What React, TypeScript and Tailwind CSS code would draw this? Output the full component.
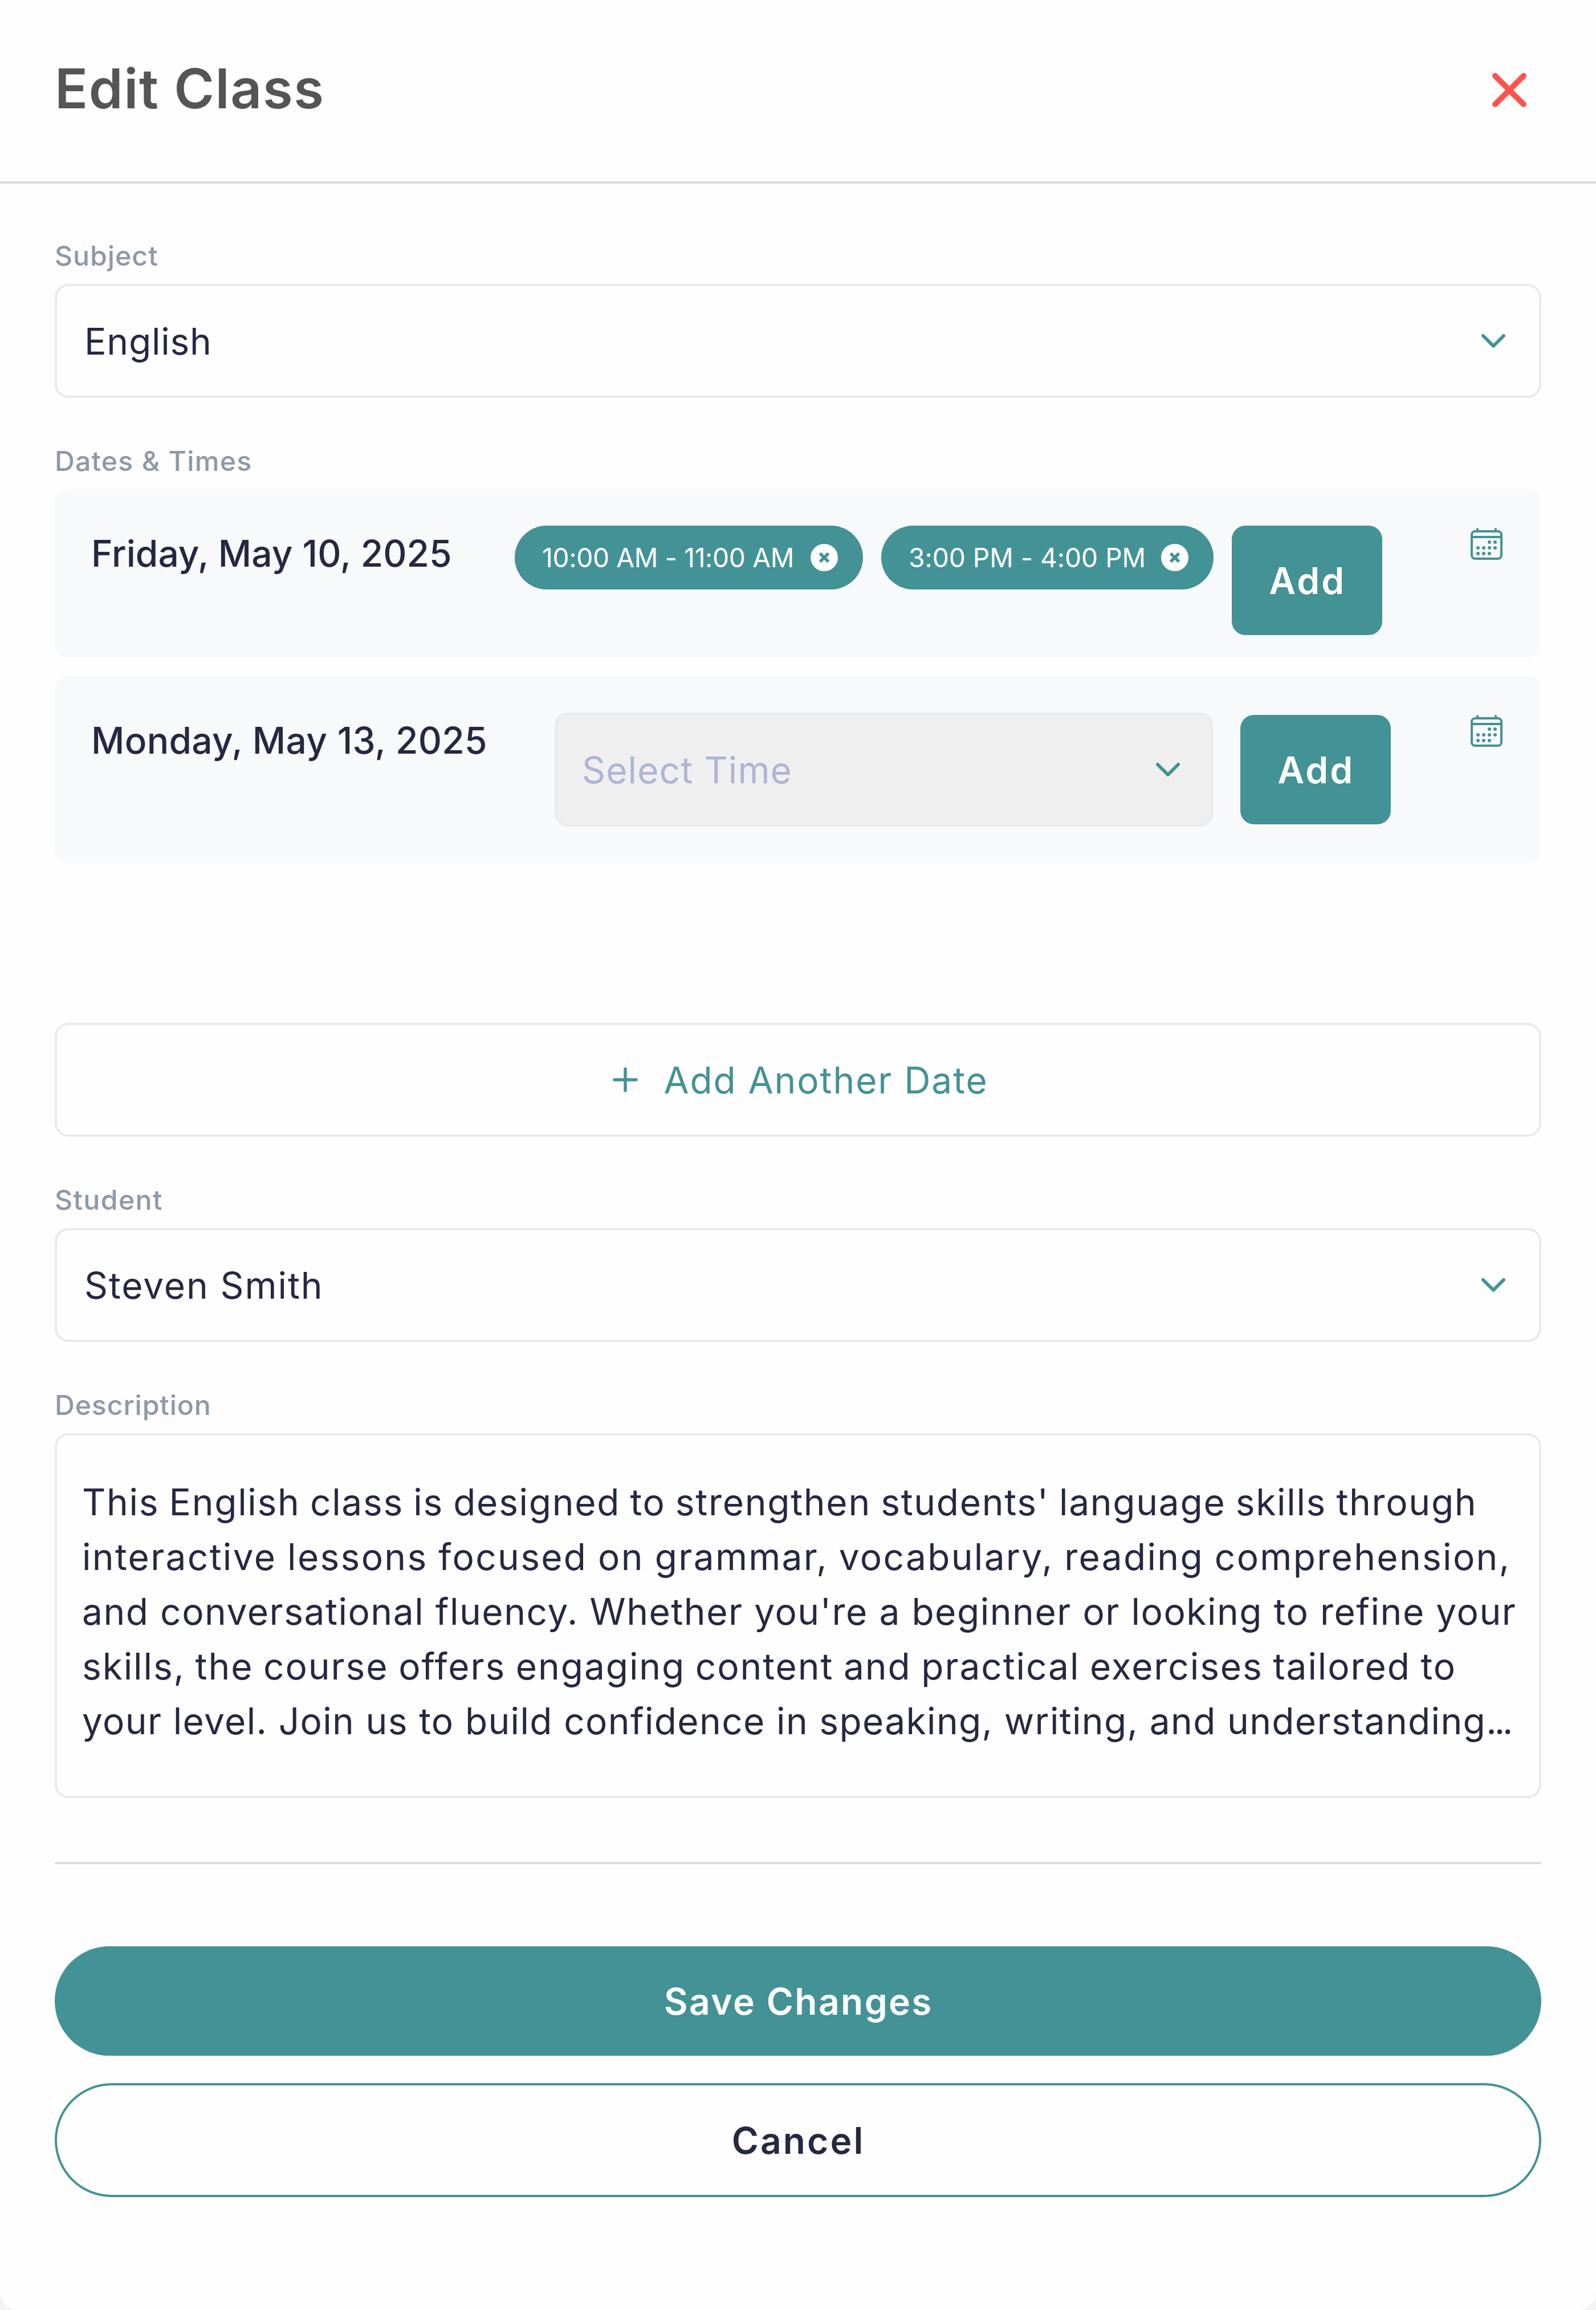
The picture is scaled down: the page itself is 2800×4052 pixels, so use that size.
import type { ReactNode } from "react";

function Chevron() {
  return (
    <svg className="size-12 shrink-0" viewBox="0 0 48 48" fill="none" stroke="#439295" strokeWidth="6" strokeLinecap="round" strokeLinejoin="round">
      <path d="M6 15 24 33 42 15" />
    </svg>
  );
}

function CalendarIcon() {
  const dots = [
    [37, 29], [47, 29],
    [17, 39], [27, 39], [37, 39], [47, 39],
    [17, 49], [27, 49], [37, 49],
  ];
  return (
    <svg className="size-16 shrink-0" viewBox="0 0 64 64" fill="none" stroke="#439295" strokeWidth="4">
      <rect x="6" y="10" width="52" height="48" rx="6" />
      <path d="M6 20H58" />
      <path d="M16 6V10M48 6V10" strokeLinecap="round" />
      {dots.map(([x, y]) => (
        <circle key={`${x}-${y}`} cx={x} cy={y} r="3" fill="#439295" stroke="none" />
      ))}
    </svg>
  );
}

function Label({ children, className }: { children: ReactNode; className: string }) {
  return <div className={`mb-[14px] h-[72px] pt-px text-5xl leading-[72px] font-medium whitespace-nowrap text-[#8e98a7] ${className}`}>{children}</div>;
}

function Select({ children, className }: { children: ReactNode; className: string }) {
  return (
    <div className={`flex h-[200px] items-center justify-between rounded-3xl border-4 border-[#eaeaea] text-[64px] leading-[96px] whitespace-nowrap ${className}`}>
      <span className="pt-[2px]">{children}</span>
      <Chevron />
    </div>
  );
}

function TimeChip({ children, className }: { children: ReactNode; className: string }) {
  return (
    <div className={`flex h-28 shrink-0 items-center justify-between rounded-full bg-[#439295] pr-[44px] pl-12 text-[46px] leading-[72px] whitespace-nowrap text-white ${className}`}>
      <span>{children}</span>
      <svg className="size-12 shrink-0" viewBox="0 0 48 48" fill="none">
        <circle cx="24" cy="24" r="24" fill="#fff" />
        <path d="M16.6 16.6 31.4 31.4M31.4 16.6 16.6 31.4" stroke="#439295" strokeWidth="5.5" />
      </svg>
    </div>
  );
}

function AddButton() {
  return (
    <button className="flex h-48 w-[264px] shrink-0 items-center justify-center rounded-3xl bg-[#439295] pt-[2px] pl-[2px] text-[64px] leading-[96px] font-semibold tracking-[3.1px] text-white">
      Add
    </button>
  );
}

const description = [
  { text: "This English class is designed to strengthen students' language skills through", style: "tracking-[1.7px] [word-spacing:-2.4px]" },
  { text: "interactive lessons focused on grammar, vocabulary, reading comprehension,", style: "tracking-[2.3px] [word-spacing:-1.5px]" },
  { text: "and conversational fluency. Whether you're a beginner or looking to refine your", style: "tracking-[1.53px]" },
  { text: "skills, the course offers engaging content and practical exercises tailored to", style: "tracking-[1.9px] [word-spacing:-2.2px]" },
  { text: "your level. Join us to build confidence in speaking, writing, and understanding", style: "tracking-[1.34px]", clipped: true },
];

export default function App() {
  return (
    <div className="h-[4052px] w-[2800px] bg-[#f4f4f4] font-['Inter',sans-serif] text-[#252840]">
      <div className="h-full overflow-hidden rounded-b-[32px] bg-[#fefefe]">
        <header className="flex h-[322px] items-start justify-between border-b-4 border-[#dadce0] pt-[83px] pr-[122px] pl-24">
          <h1 className="text-8xl leading-[144px] font-semibold tracking-[1.6px] text-[#555555]">Edit Class</h1>
          <button className="mt-[45px]" aria-label="Close">
            <svg className="size-[60px]" viewBox="0 0 60 60" fill="none" stroke="#ff524d" strokeWidth="10" strokeLinecap="round">
              <path d="M5 5 55 55M55 5 5 55" />
            </svg>
          </button>
        </header>

        <main className="px-24 pt-[90px]">
          <Label className="tracking-[1.1px]">Subject</Label>
          <Select className="pr-14 pl-12 tracking-[0.8px]">English</Select>

          <Label className="mt-[74px] tracking-[1.35px]">Dates &amp; Times</Label>
          <div className="flex h-[296px] items-start rounded-3xl bg-[#f8f9fb] px-16 pt-16">
            <div className="w-[743px] shrink-0 pt-px text-[64px] leading-[96px] font-medium tracking-[0.03px] whitespace-nowrap">Friday, May 10, 2025</div>
            <div className="flex flex-1 items-start gap-8">
              <TimeChip className="w-[611px] tracking-[-0.28px]">10:00 AM - 11:00 AM</TimeChip>
              <TimeChip className="w-[583px] tracking-[0.04px]">3:00 PM - 4:00 PM</TimeChip>
              <AddButton />
            </div>
            <CalendarIcon />
          </div>
          <div className="mt-8 flex h-[328px] items-start rounded-3xl bg-[#f8f9fb] px-16 pt-16">
            <div className="w-[813px] shrink-0 pt-px text-[64px] leading-[96px] font-medium tracking-[0.3px] whitespace-nowrap">Monday, May 13, 2025</div>
            <div className="flex flex-1 items-center gap-12">
              <Select className="w-[1155px] shrink-0 bg-[#efefef] pr-[51px] pl-11 tracking-[1.1px] text-[#aeb4d5]">Select Time</Select>
              <AddButton />
            </div>
            <CalendarIcon />
          </div>

          <button className="mt-[280px] flex h-[200px] w-full items-center justify-center gap-[43px] rounded-3xl border-4 border-[#eaeaea] pl-[7px] text-[64px] leading-[96px] tracking-[1.9px] text-[#439295]">
            <svg className="size-12" viewBox="0 0 48 48" fill="none" stroke="#439295" strokeWidth="5.5" strokeLinecap="round">
              <path d="M24 5V43M5 24H43" />
            </svg>
            <span className="pt-[2px]">Add Another Date</span>
          </button>

          <Label className="mt-[74px] tracking-[1.5px]">Student</Label>
          <Select className="pr-14 pl-12 tracking-[1.9px]">Steven Smith</Select>

          <Label className="mt-[74px] tracking-[1px]">Description</Label>
          <div className="h-[640px] rounded-3xl border-4 border-[#eaeaea] pt-[69px] pl-11 text-[64px] leading-[96px] whitespace-nowrap">
            {description.map((line) => (
              <div key={line.text} className={line.style}>
                {line.text}
                {line.clipped && <span className="tracking-[-4px]">...</span>}
              </div>
            ))}
          </div>

          <hr className="mt-28 h-1 border-0 bg-[#d9dee1]" />

          <button className="mt-36 flex h-48 w-full items-center justify-center rounded-full bg-[#439295] pt-[2px] pl-[2px] text-[64px] leading-[96px] font-semibold tracking-[2.41px] text-white">
            Save Changes
          </button>
          <button className="mt-12 flex h-[200px] w-full items-center justify-center rounded-full border-4 border-[#439295] pt-[2px] pl-px text-[64px] leading-[96px] font-semibold tracking-[3.1px]">
            Cancel
          </button>
        </main>
      </div>
    </div>
  );
}
